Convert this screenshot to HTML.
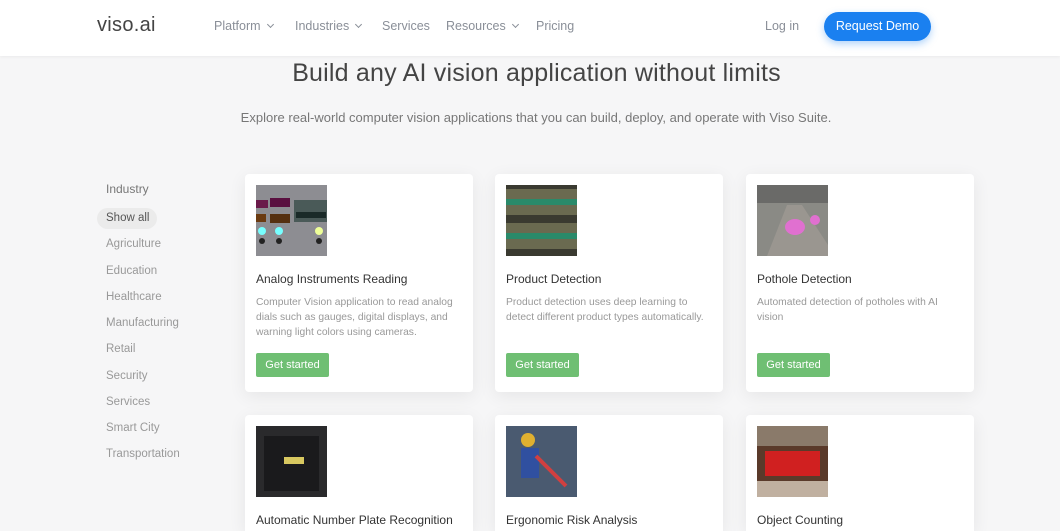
<!DOCTYPE html>
<html><head><style>
*{margin:0;padding:0;box-sizing:border-box}
html,body{width:1060px;height:531px;overflow:hidden}
body{background:#f6f6f7;font-family:"Liberation Sans",sans-serif;position:relative}
.hdr{position:absolute;left:0;top:0;width:1060px;height:56px;background:#fff;box-shadow:0 1px 3px rgba(0,0,0,.05)}
.logo{position:absolute;left:97px;top:14px;font-size:20px;color:#444;letter-spacing:.3px}
.nav{position:absolute;top:19px;font-size:12.5px;color:#8a8f98}
.chev{display:inline-block;width:5px;height:5px;border-right:1.2px solid #8a8f98;border-bottom:1.2px solid #8a8f98;transform:rotate(45deg);margin-left:7px;position:relative;top:-3px}
.btn{position:absolute;left:824px;top:12px;width:107px;height:29px;background:#1a80f0;border-radius:15px;color:#fff;font-size:12.5px;text-align:center;line-height:29px;box-shadow:0 3px 8px rgba(26,128,240,.35)}
h1{position:absolute;left:0;width:1073px;top:59px;text-align:center;font-weight:normal;font-size:25px;color:#444;letter-spacing:.2px}
.sub{position:absolute;left:0;width:1072px;top:110px;text-align:center;font-size:13px;color:#777}
.side{position:absolute;left:106px;font-size:11.5px;color:#999}
.card{position:absolute;width:228px;height:218px;background:#fff;border-radius:4px;box-shadow:0 4px 18px rgba(0,0,0,.07)}
.card.r2{height:116px;border-radius:4px 4px 0 0}
.img{position:absolute;left:11px;top:11px;width:71px;height:71px}
.t{position:absolute;left:11px;top:98px;font-size:12px;color:#333}
.d{position:absolute;left:11px;top:121px;width:210px;font-size:10.3px;line-height:15px;color:#999}
.g{position:absolute;left:11px;top:179px;width:73px;height:24px;background:#6fbf73;color:#fff;font-size:11px;text-align:center;line-height:24px;border-radius:2px}
</style></head><body>
<div class="hdr">
<div class="logo">viso.ai</div>
<div class="nav" style="left:214px">Platform<span class="chev"></span></div>
<div class="nav" style="left:295px">Industries<span class="chev"></span></div>
<div class="nav" style="left:382px">Services</div>
<div class="nav" style="left:446px">Resources<span class="chev"></span></div>
<div class="nav" style="left:536px">Pricing</div>
<div class="nav" style="left:765px">Log in</div>
<div class="btn">Request Demo</div>
</div>
<h1>Build any AI vision application without limits</h1>
<div class="sub">Explore real-world computer vision applications that you can build, deploy, and operate with Viso Suite.</div>
<div class="side" style="top:182px;font-size:12px;color:#777">Industry</div>
<div style="position:absolute;left:97px;top:208px;width:60px;height:21px;background:#ebebeb;border-radius:11px"></div>
<div class="side" style="top:212px;color:#555">Show all</div>
<div class="side" style="top:238px">Agriculture</div>
<div class="side" style="top:265px">Education</div>
<div class="side" style="top:291px">Healthcare</div>
<div class="side" style="top:317px">Manufacturing</div>
<div class="side" style="top:343px">Retail</div>
<div class="side" style="top:370px">Security</div>
<div class="side" style="top:396px">Services</div>
<div class="side" style="top:422px">Smart City</div>
<div class="side" style="top:448px">Transportation</div>

<div class="card" style="left:245px;top:174px">
<svg class="img" viewBox="0 0 71 71"><rect width="71" height="71" fill="#8d8d92"/><rect x="0" y="15" width="12" height="8" fill="#6a1a4a"/><rect x="14" y="13" width="20" height="9" fill="#5a1040"/><rect x="0" y="29" width="10" height="8" fill="#6a3a10"/><rect x="14" y="29" width="20" height="9" fill="#553010"/><rect x="38" y="15" width="33" height="22" fill="#4a5a58"/><rect x="40" y="27" width="30" height="6" fill="#1a2a28"/><circle cx="6" cy="46" r="4" fill="#7ff"/><circle cx="23" cy="46" r="4" fill="#7ff"/><circle cx="63" cy="46" r="4" fill="#ef9"/><circle cx="6" cy="56" r="3" fill="#222"/><circle cx="23" cy="56" r="3" fill="#222"/><circle cx="63" cy="56" r="3" fill="#222"/></svg>
<div class="t">Analog Instruments Reading</div>
<div class="d">Computer Vision application to read analog dials such as gauges, digital displays, and warning light colors using cameras.</div>
<div class="g">Get started</div></div>

<div class="card" style="left:495px;top:174px">
<svg class="img" viewBox="0 0 71 71"><rect width="71" height="71" fill="#3a3a30"/><rect y="4" width="71" height="26" fill="#6a6a50"/><rect y="14" width="71" height="6" fill="#2a8a6a"/><rect y="38" width="71" height="26" fill="#6a6a50"/><rect y="48" width="71" height="6" fill="#2a8a6a"/></svg>
<div class="t">Product Detection</div>
<div class="d">Product detection uses deep learning to detect different product types automatically.</div>
<div class="g">Get started</div></div>

<div class="card" style="left:746px;top:174px">
<svg class="img" viewBox="0 0 71 71"><rect width="71" height="71" fill="#8a8a85"/><rect width="71" height="18" fill="#6a6a68"/><path d="M10 71 L30 20 L45 20 L71 60 L71 71Z" fill="#9a9690"/><ellipse cx="38" cy="42" rx="10" ry="8" fill="#e070d0"/><circle cx="58" cy="35" r="5" fill="#e070d0"/></svg>
<div class="t">Pothole Detection</div>
<div class="d">Automated detection of potholes with AI vision</div>
<div class="g">Get started</div></div>

<div class="card r2" style="left:245px;top:415px">
<svg class="img" viewBox="0 0 71 71"><rect width="71" height="71" fill="#2a2a2c"/><rect x="8" y="10" width="55" height="55" fill="#1a1a1c"/><rect x="28" y="31" width="20" height="7" fill="#d8c860"/></svg>
<div class="t">Automatic Number Plate Recognition</div></div>

<div class="card r2" style="left:495px;top:415px">
<svg class="img" viewBox="0 0 71 71"><rect width="71" height="71" fill="#4a5a70"/><circle cx="22" cy="14" r="7" fill="#e0b030"/><rect x="15" y="22" width="18" height="30" fill="#3050a0"/><path d="M30 30 L60 60" stroke="#d04040" stroke-width="4"/></svg>
<div class="t">Ergonomic Risk Analysis</div></div>

<div class="card r2" style="left:746px;top:415px">
<svg class="img" viewBox="0 0 71 71"><rect width="71" height="71" fill="#5a3a2a"/><rect y="0" width="71" height="20" fill="#8a7a6a"/><rect x="8" y="25" width="55" height="25" fill="#d02020"/><rect y="55" width="71" height="16" fill="#c0b0a0"/></svg>
<div class="t">Object Counting</div></div>
</body></html>
